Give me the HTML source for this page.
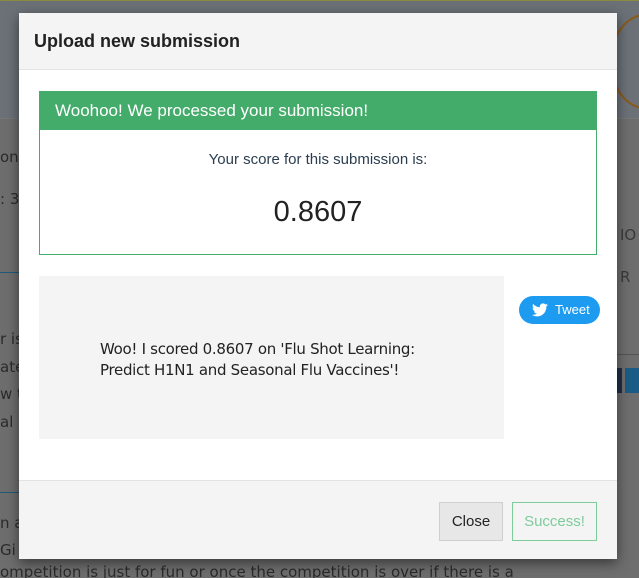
<!DOCTYPE html>
<html style="overflow:hidden;height:578px"><head><meta charset="utf-8"><style>
*{box-sizing:border-box;margin:0;padding:0}
body{width:639px;height:578px;overflow:hidden;position:relative;background:#6e6e6e;font-family:"Liberation Sans","DejaVu Sans",sans-serif}
.topbg{position:absolute;left:0;top:0;width:639px;height:118px;background:#6b7177;border-top:1px solid #8a8a40}
.bgtxt{position:absolute;color:#2b2b2b;font-size:15px;font-family:"DejaVu Sans",sans-serif;white-space:nowrap}
.modal{position:absolute;left:19px;top:13px;width:598px;height:546px;background:#fff;box-shadow:0 4px 12px rgba(0,0,0,.5)}
.hdr{height:57px;background:#f4f4f4;border-bottom:1px solid #e3e3e3;padding:18px 0 0 15px;font-weight:bold;font-size:18px;color:#222}
.alert{position:absolute;left:20px;top:78px;width:558px;height:164px;border:1px solid #43ac6a}
.ah{height:38px;background:#43ac6a;color:#fff;font-size:17px;padding:9px 0 0 15px}
.sc1{text-align:center;color:#2b3e50;font-size:15px;margin-top:21px}
.sc2{text-align:center;color:#222;font-size:29px;margin-top:28px}
.gray{position:absolute;left:20px;top:263px;width:465px;height:163px;background:#f4f4f4;padding:63px 0 0 61px;font-size:15px;line-height:21px;color:#222;font-family:"DejaVu Sans",sans-serif;letter-spacing:-.3px}
.tw{position:absolute;left:500px;top:283px;width:81px;height:28px;border-radius:14px;background:#1d9bf0;color:#fff;font-size:13px;padding:6px 0 0 36px}
.tw svg{position:absolute;left:13px;top:7px}
.ftr{position:absolute;left:0;top:467px;width:598px;height:79px;background:#f4f4f4;border-top:1px solid #e3e3e3}
.b1{position:absolute;left:420px;top:21px;width:64px;height:39px;background:#e7e7e7;border:1px solid #cfcfcf;color:#222;font-size:15px;text-align:center;line-height:37px}
.b2{position:absolute;left:493px;top:21px;width:85px;height:39px;border:1px solid #7dcc9b;color:#7dcc9b;font-size:15px;text-align:center;line-height:37px}
</style></head><body>
<div class="topbg"></div>
<div style="position:absolute;left:0;top:118px;width:639px;height:1px;background:#777"></div>
<div class="bgtxt" style="left:0;top:148px">ons</div>
<div class="bgtxt" style="left:0;top:190px">: 3</div>
<div class="bgtxt" style="left:0;top:330px">r is</div>
<div class="bgtxt" style="left:0;top:358px">ate</div>
<div class="bgtxt" style="left:0;top:385px">w to</div>
<div class="bgtxt" style="left:0;top:413px">al is</div>
<div class="bgtxt" style="left:0;top:514px">n a</div>
<div class="bgtxt" style="left:0;top:541px"> Gi</div>
<div class="bgtxt" style="left:0;top:563px">ompetition is just for fun or once the competition is over if there is a</div>
<div style="position:absolute;left:0;top:272px;width:20px;height:1px;background:#1e5b7a"></div>
<div style="position:absolute;left:0;top:492px;width:20px;height:1px;background:#1e5b7a"></div>
<div class="bgtxt" style="left:620px;top:226px;color:#3a3a3a">IO</div>
<div class="bgtxt" style="left:620px;top:268px;color:#3a3a3a">R</div>
<div style="position:absolute;left:617px;top:354px;width:22px;height:1px;background:#555"></div>
<div style="position:absolute;left:617px;top:368px;width:5px;height:25px;background:#1e2f4a"></div>
<div style="position:absolute;left:625px;top:368px;width:14px;height:25px;background:#1a5c86"></div>
<div style="position:absolute;left:610px;top:14px;width:70px;height:95px;border:2px solid #8a5a1a;border-radius:50%"></div>
<div class="modal">
<div class="hdr">Upload new submission</div>
<div class="alert"><div class="ah">Woohoo! We processed your submission!</div>
<div class="sc1">Your score for this submission is:</div>
<div class="sc2">0.8607</div></div>
<div class="gray">Woo! I scored 0.8607 on 'Flu Shot Learning:<br>Predict H1N1 and Seasonal Flu Vaccines'!</div>
<div class="tw"><svg width="16" height="14" viewBox="0 0 24 20"><path fill="#fff" d="M24 2.4c-.9.4-1.8.7-2.8.8 1-.6 1.800-1.600 2.200-2.700-1 .6-2 1-3.100 1.200C19.300.7 18 0 16.600 0c-2.700 0-4.900 2.200-4.900 4.900 0 .4 0 .8.1 1.100C7.700 5.800 4.100 3.900 1.700.9c-.4.7-.7 1.600-.7 2.500 0 1.700.9 3.200 2.200 4.100-.8 0-1.600-.2-2.200-.6v.1c0 2.400 1.700 4.400 3.900 4.800-.4.1-.8.2-1.300.2-.3 0-.6 0-.9-.1.6 2 2.400 3.400 4.600 3.400-1.700 1.300-3.800 2.100-6.100 2.100H0c2.200 1.400 4.800 2.200 7.500 2.200 9.100 0 14-7.500 14-14v-.6c1-.7 1.800-1.600 2.500-2.600z"/></svg>Tweet</div>
<div class="ftr"><div class="b1">Close</div><div class="b2">Success!</div></div>
</div>
</body></html>
